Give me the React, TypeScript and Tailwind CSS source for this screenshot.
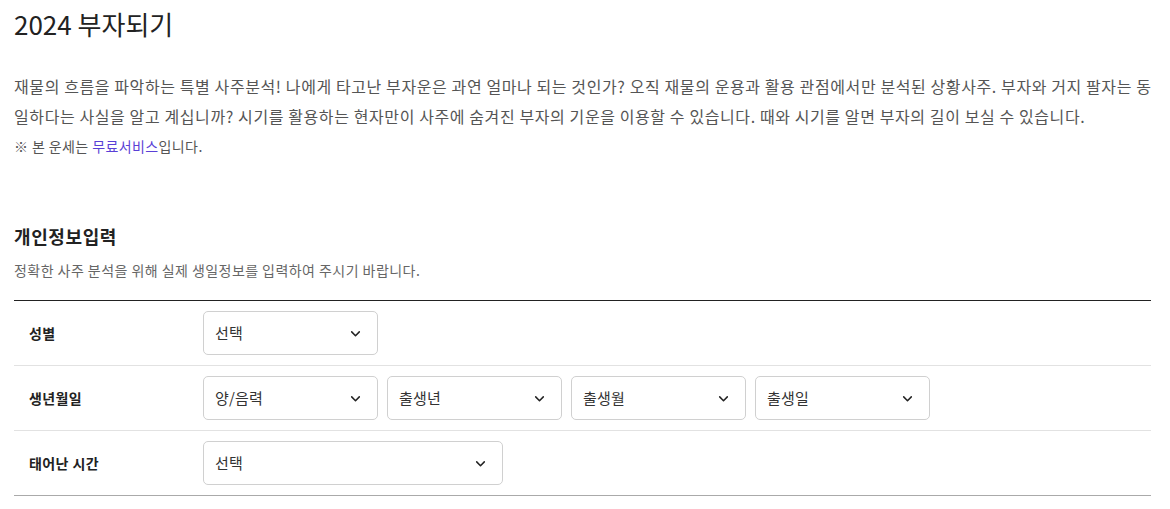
import React, { useState } from 'react';

const font = { fontFamily: '"Noto Sans CJK KR", "Noto Sans", sans-serif' };

const Chevron: React.FC = () => (
  <svg width="13" height="13" viewBox="0 0 24 24" fill="none" stroke="#222" strokeWidth="2.8" strokeLinecap="round" strokeLinejoin="round">
    <path d="M5 9l7 7 7-7" />
  </svg>
);

interface SelectBoxProps {
  placeholder: string;
  widthClass: string;
  options: string[];
}

const SelectBox: React.FC<SelectBoxProps> = ({ placeholder, widthClass, options }) => {
  const [value, setValue] = useState('');
  return (
    <label className={`relative flex h-[44px] items-center justify-between rounded-[5px] border border-[#d0d0d0] bg-white pl-[11px] pr-[15px] ${widthClass}`}>
      <span className="text-[15px] tracking-[0.2px] text-[#333]">{value || placeholder}</span>
      <Chevron />
      <select
        value={value}
        onChange={(e) => setValue(e.target.value)}
        className="absolute inset-0 cursor-pointer opacity-0"
      >
        <option value="">{placeholder}</option>
        {options.map((o) => (
          <option key={o} value={o}>
            {o}
          </option>
        ))}
      </select>
    </label>
  );
};

const range = (from: number, to: number, suffix: string) =>
  Array.from({ length: to - from + 1 }, (_, i) => `${from + i}${suffix}`);

const App: React.FC = () => {
  return (
    <div className="min-h-screen w-full bg-white px-[14px] pt-[6px]" style={font}>
      {/* Title */}
      <h1 className="text-[26px] leading-[36px] text-[#222]">2024 부자되기</h1>

      {/* Intro */}
      <p className="mt-[29px] w-[1140px] text-[16px] leading-[30px] tracking-[0.6px] text-[#555]">
        재물의 흐름을 파악하는 특별 사주분석! 나에게 타고난 부자운은 과연 얼마나 되는 것인가? 오직 재물의 운용과 활용 관점에서만 분석된 상황사주. 부자와 거지 팔자는 동일하다는 사실을 알고 계십니까? 시기를 활용하는 현자만이 사주에 숨겨진 부자의 기운을 이용할 수 있습니다. 때와 시기를 알면 부자의 길이 보실 수 있습니다.
      </p>
      <p className="mt-[5px] text-[14px] leading-[20px] tracking-[0.4px] text-[#555]">
        ※ 본 운세는 <span className="text-[#5a3fd6]">무료서비스</span>입니다.
      </p>

      {/* Personal info */}
      <h2 className="mt-[67px] text-[18px] font-bold leading-[26px] tracking-[0.6px] text-[#222]">개인정보입력</h2>
      <p className="mt-[11px] text-[14px] leading-[20px] tracking-[0.45px] text-[#666]">
        정확한 사주 분석을 위해 실제 생일정보를 입력하여 주시기 바랍니다.
      </p>

      <div className="mt-[20px] w-[1137px] border-t border-[#222]">
        <div className="flex h-[65px] items-center border-b border-[#e2e2e2]">
          <div className="w-[189px] pl-[15px] text-[14px] font-bold tracking-[0.4px] text-[#222]">성별</div>
          <SelectBox placeholder="선택" widthClass="w-[175px]" options={['남자', '여자']} />
        </div>
        <div className="flex h-[65px] items-center border-b border-[#e2e2e2]">
          <div className="w-[189px] pl-[15px] text-[14px] font-bold tracking-[0.4px] text-[#222]">생년월일</div>
          <div className="flex gap-[9px]">
            <SelectBox placeholder="양/음력" widthClass="w-[175px]" options={['양력', '음력']} />
            <SelectBox placeholder="출생년" widthClass="w-[175px]" options={range(1930, 2024, '년')} />
            <SelectBox placeholder="출생월" widthClass="w-[175px]" options={range(1, 12, '월')} />
            <SelectBox placeholder="출생일" widthClass="w-[175px]" options={range(1, 31, '일')} />
          </div>
        </div>
        <div className="flex h-[65px] items-center border-b border-[#aaa]">
          <div className="w-[189px] pl-[15px] text-[14px] font-bold tracking-[0.4px] text-[#222]">태어난 시간</div>
          <SelectBox
            placeholder="선택"
            widthClass="w-[300px]"
            options={['모름', '자시', '축시', '인시', '묘시', '진시', '사시', '오시', '미시', '신시', '유시', '술시', '해시']}
          />
        </div>
      </div>
    </div>
  );
};

export default App;
